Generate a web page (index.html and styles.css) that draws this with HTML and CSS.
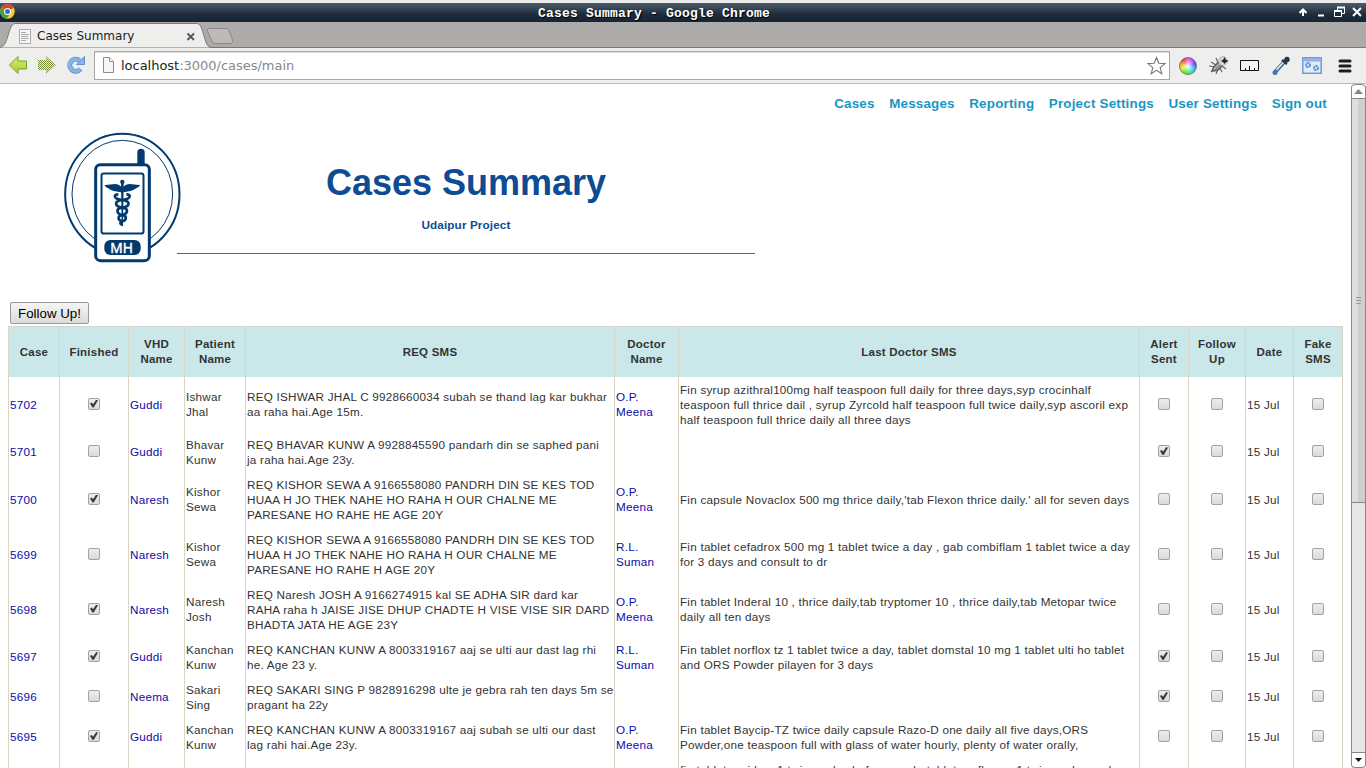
FILE: index.html
```html
<!DOCTYPE html>
<html lang="en">
<head>
<meta charset="utf-8">
<title>Cases Summary</title>
<link rel="stylesheet" href="styles.css">
</head>
<body>
<div class="titlebar">
  <svg class="chrome" width="15" height="15" viewBox="0 0 30 30"><circle cx="15" cy="15" r="14.5" fill="#f4cf2e"/><path d="M15 15 2.5 7.5A14.5 14.5 0 0 1 27.5 7.500Z" fill="#e0402b"/><path d="M15 15 2.500 7.500A14.500 14.500 0 0 0 14 29.500L20 18Z" fill="#42a343"/><circle cx="15" cy="15" r="7" fill="#fff"/><circle cx="15" cy="15" r="5" fill="#2f73c8"/></svg>
  <span class="window-title">Cases Summary - Google Chrome</span>
  <svg class="win-buttons" width="68" height="19" viewBox="0 0 68 19" fill="none" stroke="#fff"><path d="M5 13V7M1.500 10 5 6.500l3.500 3.500M20 12.500h6" stroke-width="2"/><path d="M36.500 7.500h7v6h-7zM39.500 7V4.500h7v6H44"/><path d="M36 8h8M39 4.500h8" stroke-width="2"/><path d="M55 5l8 8M63 5l-8 8" stroke-width="2"/></svg>
</div>
<div class="tabstrip">
  <svg width="240" height="26" viewBox="0 0 240 26">
    <path d="M0 25.500C5 24 6 20 8.500 12 11 4 12 1.500 16 1.500H196C200 1.500 201 4 203.500 12 206 20 206 24 211 25.500V26H0Z" fill="#eeeeed" stroke="#7b7775"/>
    <path d="M209 6.500H226C228.500 6.500 229 8 230 11L232.500 18C233 20.500 232 21.500 230 21.500H216C213 21.500 212 20 211 17L207.500 9C207 7 208 6.500 209 6.500Z" fill="#bdbbb9" stroke="#8a8785"/>
    <path d="M19.500 7.500h11v14h-11z" fill="#f7f7f7" stroke="#aaa"/><path d="M21 10.500h5M21 12.500h8M21 14.500h7M21 16.500h8M21 18.500h5" stroke="#aaa"/>
    <path d="m187.500 11.500 6.500 6.500m0-6.500-6.500 6.500" stroke="#555" stroke-width="1.800"/>
  </svg>
  <span class="tab-title">Cases Summary</span>
</div>
<div class="toolbar">
  <svg width="90" height="35" viewBox="0 0 90 35">
    <defs><linearGradient id="g" x2="0" y2="1"><stop stop-color="#d8ee72"/><stop offset="1" stop-color="#a4cc36"/></linearGradient><pattern id="p" width="2" height="2" patternUnits="userSpaceOnUse"><path d="M0 0h1v1H0zM1 1h1v1H1z" fill="#758c38"/></pattern></defs>
    <path d="M9.500 17 18 8.500V13h8.500v8H18v4.500Z" fill="url(#g)" stroke="#7ba02a"/>
    <path d="M38 12h8V8l10 9-10 9v-4h-8Z" fill="url(#p)"/>
    <path d="M80.500 21A6 6 0 1 1 79.500 12.500" fill="none" stroke="#5f93ce" stroke-width="5"/><path d="M76.500 16.500h8V8.500Z" fill="#87b5e6" stroke="#5f93ce"/><path d="M80 21.400A6 6 0 1 1 79.500 12.500" fill="none" stroke="#87b5e6" stroke-width="3.400"/>
  </svg>
  <div class="address">
    <svg width="24" height="26" viewBox="0 0 24 26"><path d="M8.500 5.500h6l4 4v11h-10z" fill="#f6f6f6" stroke="#8b8b8b"/><path d="M14.500 5.500v4h4" fill="#fff" stroke="#8b8b8b"/></svg>
    <span class="url">localhost<span class="path">:3000/cases/main</span></span>
    <svg class="star" width="20" height="20" viewBox="0 0 20 20"><path d="m10.500 1.500 2.300 5.800 6.200.3-4.800 4 1.600 6.100-5.300-3.400-5.300 3.400 1.600-6.100-4.800-4 6.200-.3Z" fill="#fff" stroke="#777" stroke-width="1.100"/></svg>
  </div>
  <div class="extensions">
    <span class="wheel"></span>
    <svg class="bug" width="20" height="20" viewBox="0 0 20 20"><path d="m2 6 5 3M7 2l2 5M0 10l6 1M2 16l4-4M7 18l2-5M13 16l-2-4M17 13l-4-3" stroke="#666" stroke-width="1.200"/><path d="M3 15C4 10 9 5 13 6c2 4-3 10-10 9Z" fill="#888" stroke="#444"/><path d="M5 13 12 7" stroke="#ccc"/><circle cx="14" cy="5" r="4.500" fill="#d5d5d5" stroke="#999" stroke-width=".5"/><path d="m15.500 1 1.300 2.700 2.700 1.300-2.700 1.300L15.500 8l-1.300-1.700L12 5l2.200-1.300Z" fill="#222"/></svg>
    <svg class="ruler" width="20" height="13" viewBox="0 0 20 13"><path d="M.500 1.500h18v10H.500zM5.500 11V9M9.500 11V7M14.500 11V9" fill="#f4f4f4" stroke="#111"/></svg>
    <svg class="dropper" width="19" height="20" viewBox="0 0 19 20"><path d="m4 15 8-9" stroke="#34587c" stroke-width="4"/><path d="m4.500 14 8-9" stroke="#c5dced" stroke-width="2"/><path d="m10 4 5 4M12 6l3-3" stroke="#243647" stroke-width="2.500"/><circle cx="15" cy="3.500" r="2.700" fill="#243647"/><circle cx="3" cy="16.500" r="2.500" fill="#3975b9"/></svg>
    <svg class="gears" width="20" height="17" viewBox="0 0 20 17"><path d="M.8.800h18.400v15.400H.8z" fill="#dfeafa" stroke="#6e9bd8" stroke-width="1.500"/><path d="M1 1h18v3.500H1z" fill="#8db3e6"/><circle cx="6" cy="8" r="2" fill="none" stroke="#5e8fd2" stroke-width="2" stroke-dasharray="2 .6"/><circle cx="14" cy="11" r="2" fill="none" stroke="#5e8fd2" stroke-width="2" stroke-dasharray="2 .6"/></svg>
    <svg class="menu" width="14" height="14" viewBox="0 0 14 14"><path d="M2 2h10M2 7h10M2 12h10" stroke="#1d1d1d" stroke-width="3" stroke-linecap="round"/></svg>
  </div>
</div>
<div class="viewport">
<main class="page">
  <nav class="nav"><a>Cases</a><a>Messages</a><a>Reporting</a><a>Project Settings</a><a>User Settings</a><a>Sign out</a></nav>
  <header class="header">
    <svg class="logo" width="117" height="135" viewBox="30 30 351 405">
      <g fill="none" stroke="#013a6f"><ellipse cx="217" cy="223" rx="171.500" ry="182" stroke-width="6"/><ellipse cx="217" cy="222" rx="151" ry="161" stroke-width="3"/></g>
      <path d="M262 135V97a11 11 0 0 1 22 0v38z" fill="#013a6f"/>
      <rect x="137" y="134" width="161" height="288" rx="14" fill="#fff" stroke="#013a6f" stroke-width="9"/>
      <rect x="154.500" y="160.500" width="126" height="180" rx="7" fill="#fff" stroke="#013a6f" stroke-width="6"/>
      <rect x="163" y="360" width="109" height="45" rx="18" fill="#013a6f"/>
      <text class="logo-text" x="215" y="398" text-anchor="middle" textLength="68" lengthAdjust="spacingAndGlyphs">MH</text>
      <g fill="#013a6f"><circle cx="217" cy="186" r="6.500"/><path d="M213 186h8l-2 132h-4zM163 195c17 1 31-7 44 0l7 5h6l7-5c13-7 27 1 44 0-8 10-13 9-17 12-5 5-11 5-17 7l-16 3h-9l-16-3c-6-2-12-2-17-7-4-3-9-2-16-12z"/></g>
      <path d="M205 223c-18 0-12 15 11 17 28 2 24 20 1 23-22 3-17 19 0 22 15 3 13 15 0 19-9 4-7 8 0 10M229 223c18 0 12 15-12 17-27 2-23 20 0 23 21 3 16 19 0 22-16 3-14 15 0 19" fill="none" stroke="#013a6f" stroke-width="8"/>
    </svg>
    <div class="heading"><h1>Cases Summary</h1><p>Udaipur Project</p></div>
  </header>
  <button class="follow">Follow Up!</button>
  <table class="cases">
    <colgroup><col class="c-case"><col class="c-finished"><col class="c-vhd"><col class="c-patient"><col class="c-req"><col class="c-doctor"><col class="c-last"><col class="c-alert"><col class="c-follow"><col class="c-date"><col class="c-fake"></colgroup>
    <thead><tr><th>Case</th><th>Finished</th><th>VHD<br>Name</th><th>Patient<br>Name</th><th>REQ SMS</th><th>Doctor<br>Name</th><th>Last Doctor SMS</th><th>Alert<br>Sent</th><th>Follow<br>Up</th><th>Date</th><th>Fake<br>SMS</th></tr></thead>
    <tbody>
    <tr class="tall"><td><a>5702</a></td><td class="check"><input type="checkbox" checked></td><td><a>Guddi</a></td><td>Ishwar<br>Jhal</td><td>REQ ISHWAR JHAL C 9928660034 subah se thand lag kar bukhar<br>aa raha hai.Age 15m.</td><td><a>O.P.<br>Meena</a></td><td>Fin syrup azithral100mg half teaspoon full daily for three days,syp crocinhalf<br>teaspoon full thrice dail , syrup Zyrcold half teaspoon full twice daily,syp ascoril exp<br>half teaspoon full thrice daily all three days</td><td class="check"><input type="checkbox"></td><td class="check"><input type="checkbox"></td><td>15 Jul</td><td class="check"><input type="checkbox"></td></tr>
    <tr><td><a>5701</a></td><td class="check"><input type="checkbox"></td><td><a>Guddi</a></td><td>Bhavar<br>Kunw</td><td>REQ BHAVAR KUNW A 9928845590 pandarh din se saphed pani<br>ja raha hai.Age 23y.</td><td></td><td></td><td class="check"><input type="checkbox" checked></td><td class="check"><input type="checkbox"></td><td>15 Jul</td><td class="check"><input type="checkbox"></td></tr>
    <tr class="tall"><td><a>5700</a></td><td class="check"><input type="checkbox" checked></td><td><a>Naresh</a></td><td>Kishor<br>Sewa</td><td>REQ KISHOR SEWA A 9166558080 PANDRH DIN SE KES TOD<br>HUAA H JO THEK NAHE HO RAHA H OUR CHALNE ME<br>PARESANE HO RAHE HE AGE 20Y</td><td><a>O.P.<br>Meena</a></td><td>Fin capsule Novaclox 500 mg thrice daily,'tab Flexon thrice daily.' all for seven days</td><td class="check"><input type="checkbox"></td><td class="check"><input type="checkbox"></td><td>15 Jul</td><td class="check"><input type="checkbox"></td></tr>
    <tr class="tall"><td><a>5699</a></td><td class="check"><input type="checkbox"></td><td><a>Naresh</a></td><td>Kishor<br>Sewa</td><td>REQ KISHOR SEWA A 9166558080 PANDRH DIN SE KES TOD<br>HUAA H JO THEK NAHE HO RAHA H OUR CHALNE ME<br>PARESANE HO RAHE H AGE 20Y</td><td><a>R.L.<br>Suman</a></td><td>Fin tablet cefadrox 500 mg 1 tablet twice a day , gab combiflam 1 tablet twice a day<br>for 3 days and consult to dr</td><td class="check"><input type="checkbox"></td><td class="check"><input type="checkbox"></td><td>15 Jul</td><td class="check"><input type="checkbox"></td></tr>
    <tr class="tall"><td><a>5698</a></td><td class="check"><input type="checkbox" checked></td><td><a>Naresh</a></td><td>Naresh<br>Josh</td><td>REQ Naresh JOSH A 9166274915 kal SE ADHA SIR dard kar<br>RAHA raha h JAISE JISE DHUP CHADTE H VISE VISE SIR DARD<br>BHADTA JATA HE AGE 23Y</td><td><a>O.P.<br>Meena</a></td><td>Fin tablet Inderal 10 , thrice daily,tab tryptomer 10 , thrice daily,tab Metopar twice<br>daily all ten days</td><td class="check"><input type="checkbox"></td><td class="check"><input type="checkbox"></td><td>15 Jul</td><td class="check"><input type="checkbox"></td></tr>
    <tr><td><a>5697</a></td><td class="check"><input type="checkbox" checked></td><td><a>Guddi</a></td><td>Kanchan<br>Kunw</td><td>REQ KANCHAN KUNW A 8003319167 aaj se ulti aur dast lag rhi<br>he. Age 23 y.</td><td><a>R.L.<br>Suman</a></td><td>Fin tablet norflox tz 1 tablet twice a day, tablet domstal 10 mg 1 tablet ulti ho tablet<br>and ORS Powder pilayen for 3 days</td><td class="check"><input type="checkbox" checked></td><td class="check"><input type="checkbox"></td><td>15 Jul</td><td class="check"><input type="checkbox"></td></tr>
    <tr><td><a>5696</a></td><td class="check"><input type="checkbox"></td><td><a>Neema</a></td><td>Sakari<br>Sing</td><td>REQ SAKARI SING P 9828916298 ulte je gebra rah ten days 5m se<br>pragant ha 22y</td><td></td><td></td><td class="check"><input type="checkbox" checked></td><td class="check"><input type="checkbox"></td><td>15 Jul</td><td class="check"><input type="checkbox"></td></tr>
    <tr><td><a>5695</a></td><td class="check"><input type="checkbox" checked></td><td><a>Guddi</a></td><td>Kanchan<br>Kunw</td><td>REQ KANCHAN KUNW A 8003319167 aaj subah se ulti our dast<br>lag rahi hai.Age 23y.</td><td><a>O.P.<br>Meena</a></td><td>Fin tablet Baycip-TZ twice daily capsule Razo-D one daily all five days,ORS<br>Powder,one teaspoon full with glass of water hourly, plenty of water orally,</td><td class="check"><input type="checkbox"></td><td class="check"><input type="checkbox"></td><td>15 Jul</td><td class="check"><input type="checkbox"></td></tr>
    <tr class="tall last"><td></td><td></td><td></td><td></td><td></td><td></td><td>fin tablet ranidom 1 twice a day before meal , tablet norflox oz 1 twice a day and</td><td></td><td></td><td></td><td></td></tr>
    </tbody>
  </table>
</main>
<div class="scrollbar">
  <span class="arrow"><svg width="9" height="5" viewBox="0 0 9 5"><path d="M0 5h9L4.500 0z" fill="#888"/></svg></span>
  <span class="thumb"><i></i><i></i><i></i></span>
  <span class="track"></span>
  <span class="arrow down"><svg width="7" height="4" viewBox="0 0 7 4"><path d="M0 0h7L3.500 4z" fill="#111"/></svg></span>
</div>
</div>
</body>
</html>
```
FILE: styles.css
```css
* { box-sizing: border-box; }
body { margin: 0; width: 1366px; height: 768px; overflow: hidden; display: flex; flex-direction: column; background: #fff; border-top: 3px solid #ececec; font-family: "Liberation Sans", Arial, sans-serif; }
svg { display: block; flex: none; }
.titlebar { flex: none; height: 19px; display: grid; grid-template-columns: 68px 1fr 68px; align-items: center; background: linear-gradient(#4d5c6a, #1d2b3b 60%, #172433); }
.window-title { padding: 2px 58px 0 0; text-align: center; font: bold 13px/17px "Liberation Mono", monospace; letter-spacing: .2px; color: #fff; text-shadow: 1px 1px 1px #000; }
.chrome { margin-top: -3px; }
.tabstrip { flex: none; height: 26px; position: relative; background: #adaba9; border-bottom: 1px solid #7b7775; }
.tab-title { position: absolute; left: 37px; top: 6px; font: 12px/17px "DejaVu Sans", sans-serif; color: #222; }
.toolbar { flex: none; height: 36px; display: flex; background: #eeeeed; border-bottom: 1px solid #b9b8b6; }
.address { margin: 3px 0 0 4px; width: 1076px; height: 29px; display: flex; background: #fff; border: 1px solid #a9a8a5; box-shadow: inset 0 1px #ddd; }
.url { flex: 1; padding-left: 2px; font: 13px/27px "DejaVu Sans", sans-serif; letter-spacing: -.02px; color: #222; }
.path { color: #888; }
.star { margin: 4px 3px 0 0; }
.extensions { flex: 1; display: flex; align-items: center; padding-left: 9px; }
.wheel { flex: none; width: 18px; height: 18px; border: 1px solid #777; border-radius: 50%; background: radial-gradient(#fff, #fff0 65%), conic-gradient(#e5c, #a4f 12%, #44f 20%, #2bf 32%, #2e9 45%, #5e2 58%, #de2 70%, #f93 80%, #e33 90%, #e5c); }
.bug { margin-left: 12px; }
.ruler { margin-left: 11px; }
.dropper { margin-left: 12px; }
.gears { margin-left: 11px; }
.menu { margin-left: 16px; }
.viewport { flex: 1; min-height: 0; display: flex; }
.page { width: 1351px; overflow: hidden; padding-left: 8px; }
.nav { height: 48px; padding: 11px 24px 0 0; display: flex; justify-content: flex-end; gap: 14.5px; font-size: 13.4px; line-height: 17px; font-weight: bold; letter-spacing: .2px; color: #1896c4; }
.header { display: flex; height: 170px; padding-left: 52px; }
.logo { overflow: visible; margin-top: -2px; }
.logo-text { font: 42px "Open Sans", sans-serif; fill: #fff; stroke: #fff; stroke-width: 1.5px; }
.heading { width: 578px; height: 122px; border-bottom: 1px solid #228b40; text-align: center; color: #0d4c92; }
h1 { margin: 29px 0 0; font-size: 36px; line-height: 44px; }
p { margin: 12px 0 0; font-size: 11.7px; line-height: 16px; font-weight: bold; letter-spacing: .13px; }
.follow { display: block; width: 79px; height: 22px; margin: 0 0 2px 2px; padding: 1px 0 0; font: 13.3px "Liberation Sans", sans-serif; border: 1px solid #999; border-radius: 2px; background: linear-gradient(#f5f5f5, #dcdcdc); color: #000; }
.cases { table-layout: fixed; width: 1335px; border-collapse: separate; border-spacing: 0; font-size: 11.7px; line-height: 15px; letter-spacing: .23px; color: #333; border-left: 1px solid #d6d5c6; white-space: nowrap; }
.cases th, .cases td { border-right: 1px solid #d6d5c6; padding: 0 0 1px 1px; text-align: left; }
.cases th { height: 51px; padding: 0; border-top: 1px solid #d6d5c6; background: #cae8ea; text-align: center; font-size: 11.5px; }
.cases td { height: 40px; }
.cases .tall td { height: 55px; }
.cases .last td { vertical-align: top; padding-top: 5px; }
.c-case { width: 51px; } .c-finished { width: 69px; } .c-vhd { width: 56px; } .c-patient { width: 61px; } .c-req { width: 369px; } .c-doctor { width: 64px; } .c-last { width: 461px; } .c-alert { width: 49px; } .c-follow { width: 57px; } .c-date { width: 48px; } .c-fake { width: 49px; }
.cases a { color: #0b0bab; }
.cases .check { text-align: center; padding: 0 0 2px; }
.check input { appearance: none; display: block; width: 12px; height: 12px; margin: 0 auto; border: 1px solid #a2a2a2; border-radius: 2px; background: linear-gradient(#ededed, #dadada); }
.check input:checked::after { content: ""; display: block; width: 8px; height: 8px; margin: 1px; background: #3a3a3a; clip-path: polygon(0 50%, 22% 38%, 38% 58%, 78% 0, 100% 8%, 46% 100%, 32% 100%); }
.scrollbar { width: 15px; display: flex; flex-direction: column; border: 1px solid #888; border-top: 0; border-radius: 4px; }
.arrow { flex: none; height: 15px; display: grid; place-items: center; background: #fff; border-top: 1px solid #888; border-bottom: 1px solid #888; border-radius: 4px 4px 0 0; }
.thumb { flex: none; height: 404px; display: flex; flex-direction: column; align-items: center; justify-content: center; gap: 2px; background: linear-gradient(90deg, #dededd 50%, #d0cfcd 50%); border-bottom: 1px solid #888; }
.thumb i { width: 5px; height: 1px; background: #999; }
.track { flex: 1; background: #e7e7e6; }
.arrow.down { border-bottom: 0; border-radius: 0 0 4px 4px; }
```
